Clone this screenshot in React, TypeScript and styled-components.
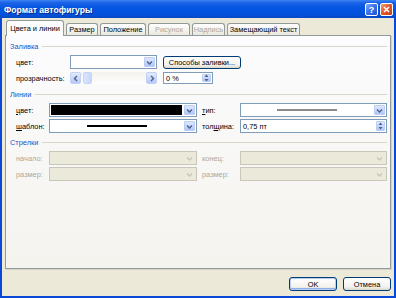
import React from 'react';
import styled, { createGlobalStyle, css } from 'styled-components';

const FONT = `"Liberation Sans", Arial, sans-serif`;

const Global = createGlobalStyle`
  html, body { margin: 0; padding: 0; width: 396px; height: 298px; overflow: hidden; background: #ece9d8; }
  #root { width: 396px; height: 298px; }
  * { box-sizing: border-box; }
`;

const Window = styled.div`
  width: 396px;
  height: 298px;
  display: flex;
  flex-direction: column;
  background: #0a48d8;
  font-family: ${FONT};
  font-size: 7.4px;
  color: #000;
`;

const TitleBar = styled.div`
  height: 18px;
  display: flex;
  align-items: center;
  gap: 2px;
  padding: 1px 3px 0 4px;
  background: linear-gradient(#3b86f5 0%, #1c62e6 15%, #0455e3 45%, #0252db 80%, #0947c2 100%);
`;

const Title = styled.div`
  flex: 1;
  color: #fff;
  font-weight: bold;
  font-size: 8.6px;
  text-shadow: 1px 1px 0 #0b2a8a;
`;

const CapButton = styled.div<{ $close?: boolean }>`
  width: 13px;
  height: 13px;
  border: 1px solid #fff;
  border-radius: 2px;
  display: flex;
  align-items: center;
  justify-content: center;
  color: #fff;
  font-weight: bold;
  font-size: 9px;
  background: ${(p) =>
    p.$close
      ? 'linear-gradient(135deg, #f0a080 0%, #e35b2d 45%, #c8401a 100%)'
      : 'linear-gradient(135deg, #8bb2fa 0%, #3a73ea 45%, #2453d0 100%)'};
`;

const Body = styled.div`
  flex: 1;
  margin: 0 2px 2px 2px;
  background: #ece9d8;
  display: flex;
  flex-direction: column;
  padding: 2px 3px 5px 3px;
`;

const TabStrip = styled.div`
  height: 15px;
  display: flex;
  align-items: flex-end;
  gap: 2px;
  padding-left: 1px;
  position: relative;
  z-index: 1;
`;

const Tab = styled.div<{ $w: number; $active?: boolean; $disabled?: boolean }>`
  width: ${(p) => p.$w}px;
  height: 12px;
  border: 1px solid #919b9c;
  border-bottom: none;
  border-radius: 3px 3px 0 0;
  background: linear-gradient(#ffffff, #f3f2ee 60%, #e8e6dd);
  display: flex;
  align-items: center;
  justify-content: center;
  white-space: nowrap;
  color: ${(p) => (p.$disabled ? '#aca899' : '#000')};
  ${(p) =>
    p.$active &&
    css`
      height: 16px;
      margin-bottom: -1px;
      background: #fcfcfe;
      padding-bottom: 1px;
    `}
`;

const Panel = styled.div`
  height: 234px;
  border: 1px solid #919b9c;
  background: linear-gradient(#fcfcfe, #f4f3ee);
  box-shadow: 1px 1px 0 #d6d3c6;
  padding: 4px 3px 0 4px;
  display: flex;
  flex-direction: column;
  gap: 3px;
`;

const Section = styled.div`
  display: flex;
  flex-direction: column;
`;

const SectionHead = styled.div`
  height: 12px;
  display: flex;
  align-items: center;
  gap: 4px;
  color: #1d50c9;
  &::after {
    content: '';
    flex: 1;
    height: 1px;
    background: #d8d6cb;
  }
`;

const Rows = styled.div<{ $cols: string }>`
  margin-top: 3px;
  padding-left: 6px;
  display: grid;
  grid-template-columns: ${(p) => p.$cols};
  grid-auto-rows: 14px;
  row-gap: 2px;
  align-items: center;
`;

const Label = styled.div<{ $disabled?: boolean }>`
  color: ${(p) => (p.$disabled ? '#aca899' : '#000')};
  white-space: nowrap;
`;

const U = styled.span`
  text-decoration: underline;
`;

const Combo = styled.div<{ $disabled?: boolean }>`
  height: 14px;
  border: 1px solid ${(p) => (p.$disabled ? '#c9c7ba' : '#7f9db9')};
  background: ${(p) => (p.$disabled ? '#ebe9da' : '#fff')};
  display: flex;
  align-items: stretch;
`;

const ComboField = styled.div`
  flex: 1;
  display: flex;
  align-items: center;
  justify-content: center;
  padding: 1px;
`;

const Swatch = styled.div<{ $color: string }>`
  align-self: stretch;
  flex: 1;
  background: ${(p) => p.$color};
`;

const LineSample = styled.div<{ $color: string; $thick: number }>`
  width: 60px;
  height: ${(p) => p.$thick}px;
  background: ${(p) => p.$color};
`;

const DropBtn = styled.div<{ $disabled?: boolean }>`
  width: 11px;
  margin: 1px;
  border-radius: 1px;
  display: flex;
  align-items: center;
  justify-content: center;
  color: ${(p) => (p.$disabled ? '#c9c7ba' : '#4d6185')};
  ${(p) =>
    !p.$disabled &&
    css`
      background: linear-gradient(#dfe8fd, #c3d4fb 60%, #b1c6f5);
      border: 1px solid #bacdf7;
    `}
`;

const Chevron = ({ dir = 'down' }: { dir?: 'down' | 'left' | 'right' }) => {
  const d =
    dir === 'down' ? 'M1 1.5 L3.5 4 L6 1.5' : dir === 'left' ? 'M4 1 L1.5 3.5 L4 6' : 'M2 1 L4.5 3.5 L2 6';
  const w = dir === 'down' ? 7 : 6;
  const h = dir === 'down' ? 5 : 7;
  return (
    <svg width={w} height={h} viewBox={`0 0 ${w} ${h}`}>
      <path d={d} fill="none" stroke="currentColor" strokeWidth="1.4" />
    </svg>
  );
};

const SpinArrows = () => (
  <svg width="5" height="8" viewBox="0 0 5 8">
    <path d="M2.5 0.5 L4.5 3 L0.5 3 Z M0.5 5 L4.5 5 L2.5 7.5 Z" fill="currentColor" />
  </svg>
);

const ScrollBar = styled.div`
  height: 12px;
  display: flex;
  align-items: stretch;
  background: linear-gradient(#f3f2ee, #fefefe);
`;

const ScrollBtn = styled.div`
  width: 11px;
  border: 1px solid #c2d2f6;
  border-radius: 2px;
  background: linear-gradient(#e3ebfd, #c6d6fb 60%, #b5c9f6);
  color: #4d6185;
  display: flex;
  align-items: center;
  justify-content: center;
`;

const Thumb = styled.div`
  width: 9px;
  margin-left: 2px;
  border: 1px solid #c6d4f4;
  border-radius: 2px;
  background: linear-gradient(90deg, #dbe5fd, #c8d7fa);
`;

const Track = styled.div`
  flex: 1;
`;

const Spinner = styled.div<{ $w?: number }>`
  width: ${(p) => (p.$w ? `${p.$w}px` : 'auto')};
  height: ${(p) => (p.$w ? 12 : 14)}px;
  border: 1px solid #7f9db9;
  background: #fff;
  display: flex;
  align-items: stretch;
`;

const SpinText = styled.div`
  flex: 1;
  display: flex;
  align-items: center;
  padding-left: 2px;
`;

const SpinBtn = styled.div`
  width: 9px;
  margin: 1px;
  border: 1px solid #bacdf7;
  border-radius: 1px;
  background: linear-gradient(#dfe8fd, #c3d4fb 60%, #b1c6f5);
  color: #4d6185;
  display: flex;
  align-items: center;
  justify-content: center;
`;

const PushButton = styled.div<{ $w: number; $h: number; $default?: boolean }>`
  width: ${(p) => p.$w}px;
  height: ${(p) => p.$h}px;
  border: 1px solid #003c74;
  border-radius: 3px;
  background: linear-gradient(#ffffff, #f4f3ee 70%, #dcd8cb);
  display: flex;
  align-items: center;
  justify-content: center;
  white-space: nowrap;
  ${(p) =>
    p.$default &&
    css`
      box-shadow: inset 0 0 0 1px #b7cdf2, inset 0 -1px 0 1px #8eb0ea;
    `}
`;

const ButtonRow = styled.div`
  margin-top: 8px;
  display: flex;
  justify-content: flex-end;
  gap: 6px;
`;

const Filler = styled.div``;

const DropCombo = ({ disabled, children }: { disabled?: boolean; children?: React.ReactNode }) => (
  <Combo $disabled={disabled}>
    <ComboField>{children}</ComboField>
    <DropBtn $disabled={disabled}>
      <Chevron />
    </DropBtn>
  </Combo>
);

export default function App() {
  return (
    <Window>
      <Global />
      <TitleBar>
        <Title>Формат автофигуры</Title>
        <CapButton>?</CapButton>
        <CapButton $close>
          <svg width="7" height="7" viewBox="0 0 7 7">
            <path d="M1 1 L6 6 M6 1 L1 6" stroke="#fff" strokeWidth="1.6" />
          </svg>
        </CapButton>
      </TitleBar>
      <Body>
        <TabStrip>
          <Tab $w={58} $active>Цвета и линии</Tab>
          <Tab $w={32}>Размер</Tab>
          <Tab $w={46}>Положение</Tab>
          <Tab $w={42} $disabled>Рисунок</Tab>
          <Tab $w={33} $disabled>Надпись</Tab>
          <Tab $w={73}>Замещающий текст</Tab>
        </TabStrip>
        <Panel>
          <Section>
            <SectionHead>Заливка</SectionHead>
            <Rows $cols="54px 87px 6px 78px 1fr">
              <Label>цвет:</Label>
              <DropCombo />
              <Filler />
              <PushButton $w={78} $h={13}>Способы заливки...</PushButton>
              <Filler />
              <Label>прозрачность:</Label>
              <ScrollBar>
                <ScrollBtn>
                  <Chevron dir="left" />
                </ScrollBtn>
                <Thumb />
                <Track />
                <ScrollBtn>
                  <Chevron dir="right" />
                </ScrollBtn>
              </ScrollBar>
              <Filler />
              <Spinner $w={50}>
                <SpinText>0 %</SpinText>
                <SpinBtn>
                  <SpinArrows />
                </SpinBtn>
              </Spinner>
              <Filler />
            </Rows>
          </Section>
          <Section>
            <SectionHead>Линии</SectionHead>
            <Rows $cols="33px 148px 5px 38px 147px">
              <Label>
                <U>ц</U>вет:
              </Label>
              <DropCombo>
                <Swatch $color="#000" />
              </DropCombo>
              <Filler />
              <Label>
                <U>т</U>ип:
              </Label>
              <DropCombo>
                <LineSample $color="#8c8c8c" $thick={2} />
              </DropCombo>
              <Label>
                <U>ш</U>аблон:
              </Label>
              <DropCombo>
                <LineSample $color="#000" $thick={2} />
              </DropCombo>
              <Filler />
              <Label>
                тол<U>щ</U>ина:
              </Label>
              <Spinner>
                <SpinText>0,75 пт</SpinText>
                <SpinBtn>
                  <SpinArrows />
                </SpinBtn>
              </Spinner>
            </Rows>
          </Section>
          <Section>
            <SectionHead>Стрелки</SectionHead>
            <Rows $cols="33px 148px 5px 38px 147px">
              <Label $disabled>начало:</Label>
              <DropCombo disabled />
              <Filler />
              <Label $disabled>конец:</Label>
              <DropCombo disabled />
              <Label $disabled>размер:</Label>
              <DropCombo disabled />
              <Filler />
              <Label $disabled>размер:</Label>
              <DropCombo disabled />
            </Rows>
          </Section>
        </Panel>
        <ButtonRow>
          <PushButton $w={48} $h={14} $default>
            OK
          </PushButton>
          <PushButton $w={48} $h={14}>
            Отмена
          </PushButton>
        </ButtonRow>
      </Body>
    </Window>
  );
}
